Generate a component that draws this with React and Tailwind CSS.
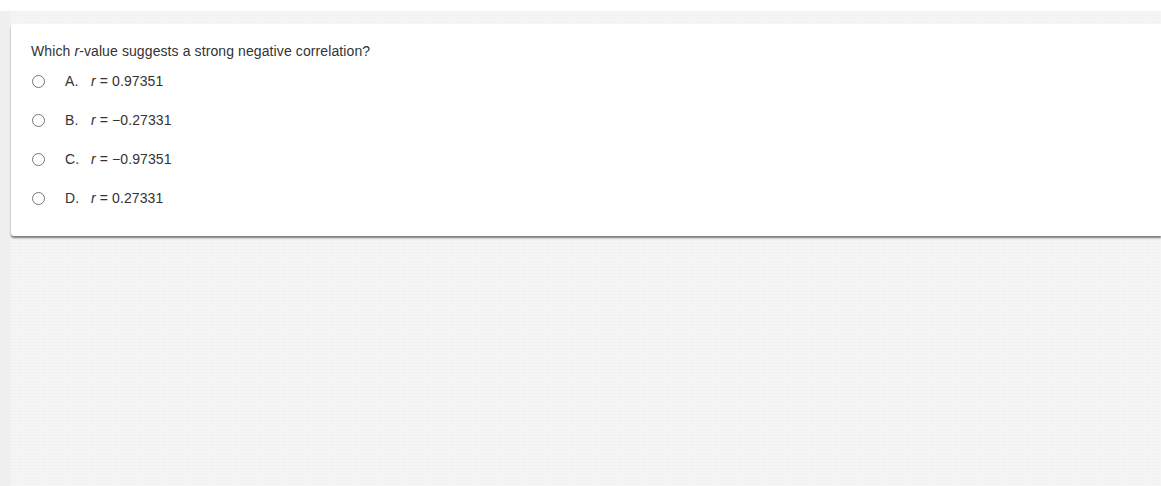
import React from 'react';

const OPTIONS = [
    { letter: 'A.', value: '0.97351' },
    { letter: 'B.', value: '\u22120.27331' },
    { letter: 'C.', value: '\u22120.97351' },
    { letter: 'D.', value: '0.27331' },
];

const App = () => {
    return (
        <div className="w-[1161px] h-[486px] bg-white pt-[11px] overflow-hidden" style={{ fontFamily: '"Liberation Sans", Arial, sans-serif' }}>
            <div className="flex h-full">
                {/* Left gutter */}
                <div className="w-[11px] shrink-0 bg-[#f0f0f0]" />

                {/* Main area, faint dotted texture */}
                <div className="flex-1 bg-[#f5f5f5] bg-[radial-gradient(#ebebeb_0.8px,transparent_0.8px)] bg-[length:3px_3px] pt-[13px]">
                    <div className="bg-white rounded-tl-[3px] rounded-bl-[3px] shadow-[0_2px_2px_rgba(0,0,0,0.5)] pl-[20px] pt-[19px] pb-[30px] text-[14px] tracking-[0.1px] text-[#333]">
                        <p className="leading-[16px] mb-[14px]">
                            Which <i>r</i>-value suggests a strong negative correlation?
                        </p>
                        <div className="flex flex-col gap-[23px]">
                            {OPTIONS.map((opt) => (
                                <label key={opt.letter} className="flex items-center h-[16px]">
                                    <span className="w-[13px] h-[13px] rounded-full border border-[#777] ml-[1px] mr-[20px]" />
                                    <span className="w-[26px]">{opt.letter}</span>
                                    <span><i>r</i> = {opt.value}</span>
                                </label>
                            ))}
                        </div>
                    </div>
                </div>
            </div>
        </div>
    );
};

export default App;
